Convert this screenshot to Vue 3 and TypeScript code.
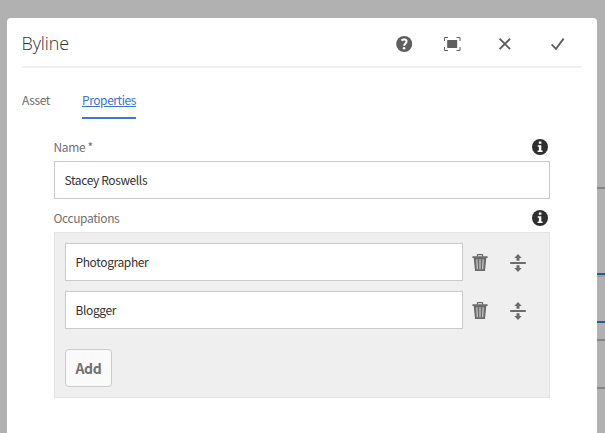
<script setup lang="ts">
import { ref } from 'vue'

const name = ref('Stacey Roswells')
const occupations = ref<string[]>(['Photographer', 'Blogger'])
const backdropRules = [
  { top: 187, kind: 'grey' },
  { top: 273, kind: 'blue shaded' },
  { top: 321, kind: 'blue' },
  { top: 339, kind: 'grey' },
  { top: 387, kind: 'grey' },
]
</script>

<template>
  <div class="page">
    <i v-for="r in backdropRules" :key="r.top" class="rule" :class="r.kind" :style="{ top: r.top + 'px' }"></i>
    <section class="dialog">
      <header class="header">
        <h1 class="title">Byline</h1>
        <nav class="actions">
          <svg class="action" viewBox="0 0 18 18">
            <circle cx="9.2" cy="9" r="8" fill="#5f5f5f" />
            <path d="M6.5 5.5C8.5 3.7 11.7 4.3 11.5 6.6C11.4 8.4 9.2 8.5 9.2 10.7" fill="none" stroke="#fff" stroke-width="2" />
            <circle cx="9.1" cy="13.3" r="1.3" fill="#fff" />
          </svg>
          <svg class="action" viewBox="0 0 18 18">
            <rect x="4.2" y="5" width="10" height="8" fill="#5f5f5f" />
            <path d="M1.5 6V2.5H5M13.5 2.5H17V6M17 12v3.5h-3.5M5 15.5H1.5V12" fill="none" stroke="#5f5f5f" stroke-width="1" />
          </svg>
          <svg class="action" viewBox="0 0 18 18">
            <path d="M3.6 3.7L14.1 14.2M14.1 3.7L3.6 14.2" fill="none" stroke="#5f5f5f" stroke-width="1.9" />
          </svg>
          <svg class="action" viewBox="0 0 18 18">
            <path d="M2.6 9.3L7 13.9L14.6 3.6" fill="none" stroke="#5f5f5f" stroke-width="1.9" />
          </svg>
        </nav>
      </header>
      <div class="tabs">
        <a class="tab">Asset</a>
        <a class="tab active">Properties</a>
      </div>
      <div class="form">
        <div class="label-row">
          <label>Name *</label>
          <svg class="info" viewBox="0 0 16 16">
            <circle cx="8" cy="8" r="8" fill="#2f2f2f" />
            <path d="M6.8 2.4h2.6v2.3H6.8zM5.7 6.2h3.6v5.2h1.3v1.6H5.6v-1.6h1.3V7.8H5.7z" fill="#fff" />
          </svg>
        </div>
        <div class="field">{{ name }}</div>
        <div class="label-row second">
          <label>Occupations</label>
          <svg class="info" viewBox="0 0 16 16">
            <circle cx="8" cy="8" r="8" fill="#2f2f2f" />
            <path d="M6.8 2.4h2.6v2.3H6.8zM5.7 6.2h3.6v5.2h1.3v1.6H5.6v-1.6h1.3V7.8H5.7z" fill="#fff" />
          </svg>
        </div>
        <div class="multifield">
          <div v-for="o in occupations" :key="o" class="item">
            <div class="field">{{ o }}</div>
            <svg class="tool" viewBox="0 0 18 18">
              <path d="M5.4 2.5V.6h5.2v1.9" fill="none" stroke="#6b6b6b" stroke-width="1.1" />
              <path d="M.4 2.2h15.2v1.8H.4zM1.7 4h12.6L13 17H3z" fill="#6b6b6b" />
              <path d="M4.8 5.2l.6 10M8 5.2v10M11.2 5.2l-.6 10" stroke="#c6c6c6" stroke-width="1.3" />
            </svg>
            <svg class="tool" viewBox="0 0 18 18">
              <path d="M1.2 8.1h15.6v1.8H1.2zM9 0l3.7 4h-2.2v2.7h-3V4H5.3zM9 18l3.7-4h-2.2v-2.7h-3V14H5.3z" fill="#6b6b6b" />
            </svg>
          </div>
          <button class="add" type="button">Add</button>
        </div>
      </div>
    </section>
  </div>
</template>

<style>
body {
  overflow: hidden;
}
</style>

<style scoped>
.page {
  position: relative;
  box-sizing: border-box;
  width: 605px;
  height: 433px;
  padding: 18px 8px 0 7px;
  overflow: hidden;
  background: #b1b1b1;
  font-family: "Noto Sans CJK SC", "Noto Sans", sans-serif;
  font-size: 12px;
  line-height: 18px;
  letter-spacing: -0.38px;
  color: #323232;
}
.rule {
  position: absolute;
  right: 0;
  width: 8px;
  height: 2px;
}
.grey {
  background: #868686;
}
.blue {
  background: #1b5f9f;
}
.shaded {
  border-bottom: 2px solid #a0a0a0;
}
.dialog {
  box-sizing: border-box;
  height: 440px;
  padding: 0 15px;
  border-radius: 4px 4px 0 0;
  background: #fff;
}
.header {
  display: flex;
  justify-content: space-between;
  align-items: center;
  box-sizing: border-box;
  height: 50px;
  padding: 2px 15px 0 0;
  border-bottom: 2px solid #f0f0f0;
}
.title {
  margin: 0 0 0 -0.5px;
  font-family: "Open Sans", "Noto Sans", sans-serif;
  font-size: 18px;
  font-weight: 300;
  line-height: 26px;
  letter-spacing: -0.1px;
  color: #323232;
}
.actions {
  display: flex;
  gap: 33px;
  padding-top: 2px;
}
.action {
  width: 18px;
  height: 18px;
}
.action:nth-child(2) {
  margin-left: -3px;
}
.action:nth-child(3) {
  margin-left: 2px;
}
.action:nth-child(4) {
  margin-left: 2px;
}
.tabs {
  display: flex;
  gap: 32px;
  margin-top: 23px;
}
.tab {
  height: 26px;
  border-bottom: 2px solid transparent;
  color: #6b6b6b;
}
.active {
  width: 54px;
  border-color: #4178cd;
  color: #3b73cb;
  letter-spacing: -0.42px;
  text-decoration: underline;
}
.form {
  padding: 19px 32px 0;
}
.label-row {
  display: flex;
  justify-content: space-between;
  height: 23px;
  color: #707070;
}
.label-row label {
  margin-left: -0.5px;
}
.second {
  height: 23px;
  margin-top: 10px;
}
.info {
  width: 16px;
  height: 16px;
  margin: 1px 1.8px 0 0;
}
.field {
  box-sizing: border-box;
  width: 100%;
  height: 38px;
  padding: 9px 9.5px;
  border: 1px solid #cacaca;
  background: #fff;
}
.multifield {
  box-sizing: border-box;
  height: 166px;
  padding: 10px;
  border: 1px solid #e4e4e4;
  background: #efefef;
}
.item {
  display: flex;
  align-items: center;
  margin-bottom: 10px;
}
.item .field {
  width: 398px;
}
.tool {
  width: 18px;
  height: 18px;
  margin: 2px 0 0 9px;
}
.tool + .tool {
  margin-left: 19px;
}
.add {
  width: 47px;
  height: 38px;
  margin-top: 10px;
  padding: 0;
  border: 1px solid #cacaca;
  border-radius: 4px;
  background: #fafafa;
  font: bold 14px/20px "Noto Sans CJK SC", "Noto Sans", sans-serif;
  letter-spacing: -0.3px;
  color: #707070;
}
</style>
